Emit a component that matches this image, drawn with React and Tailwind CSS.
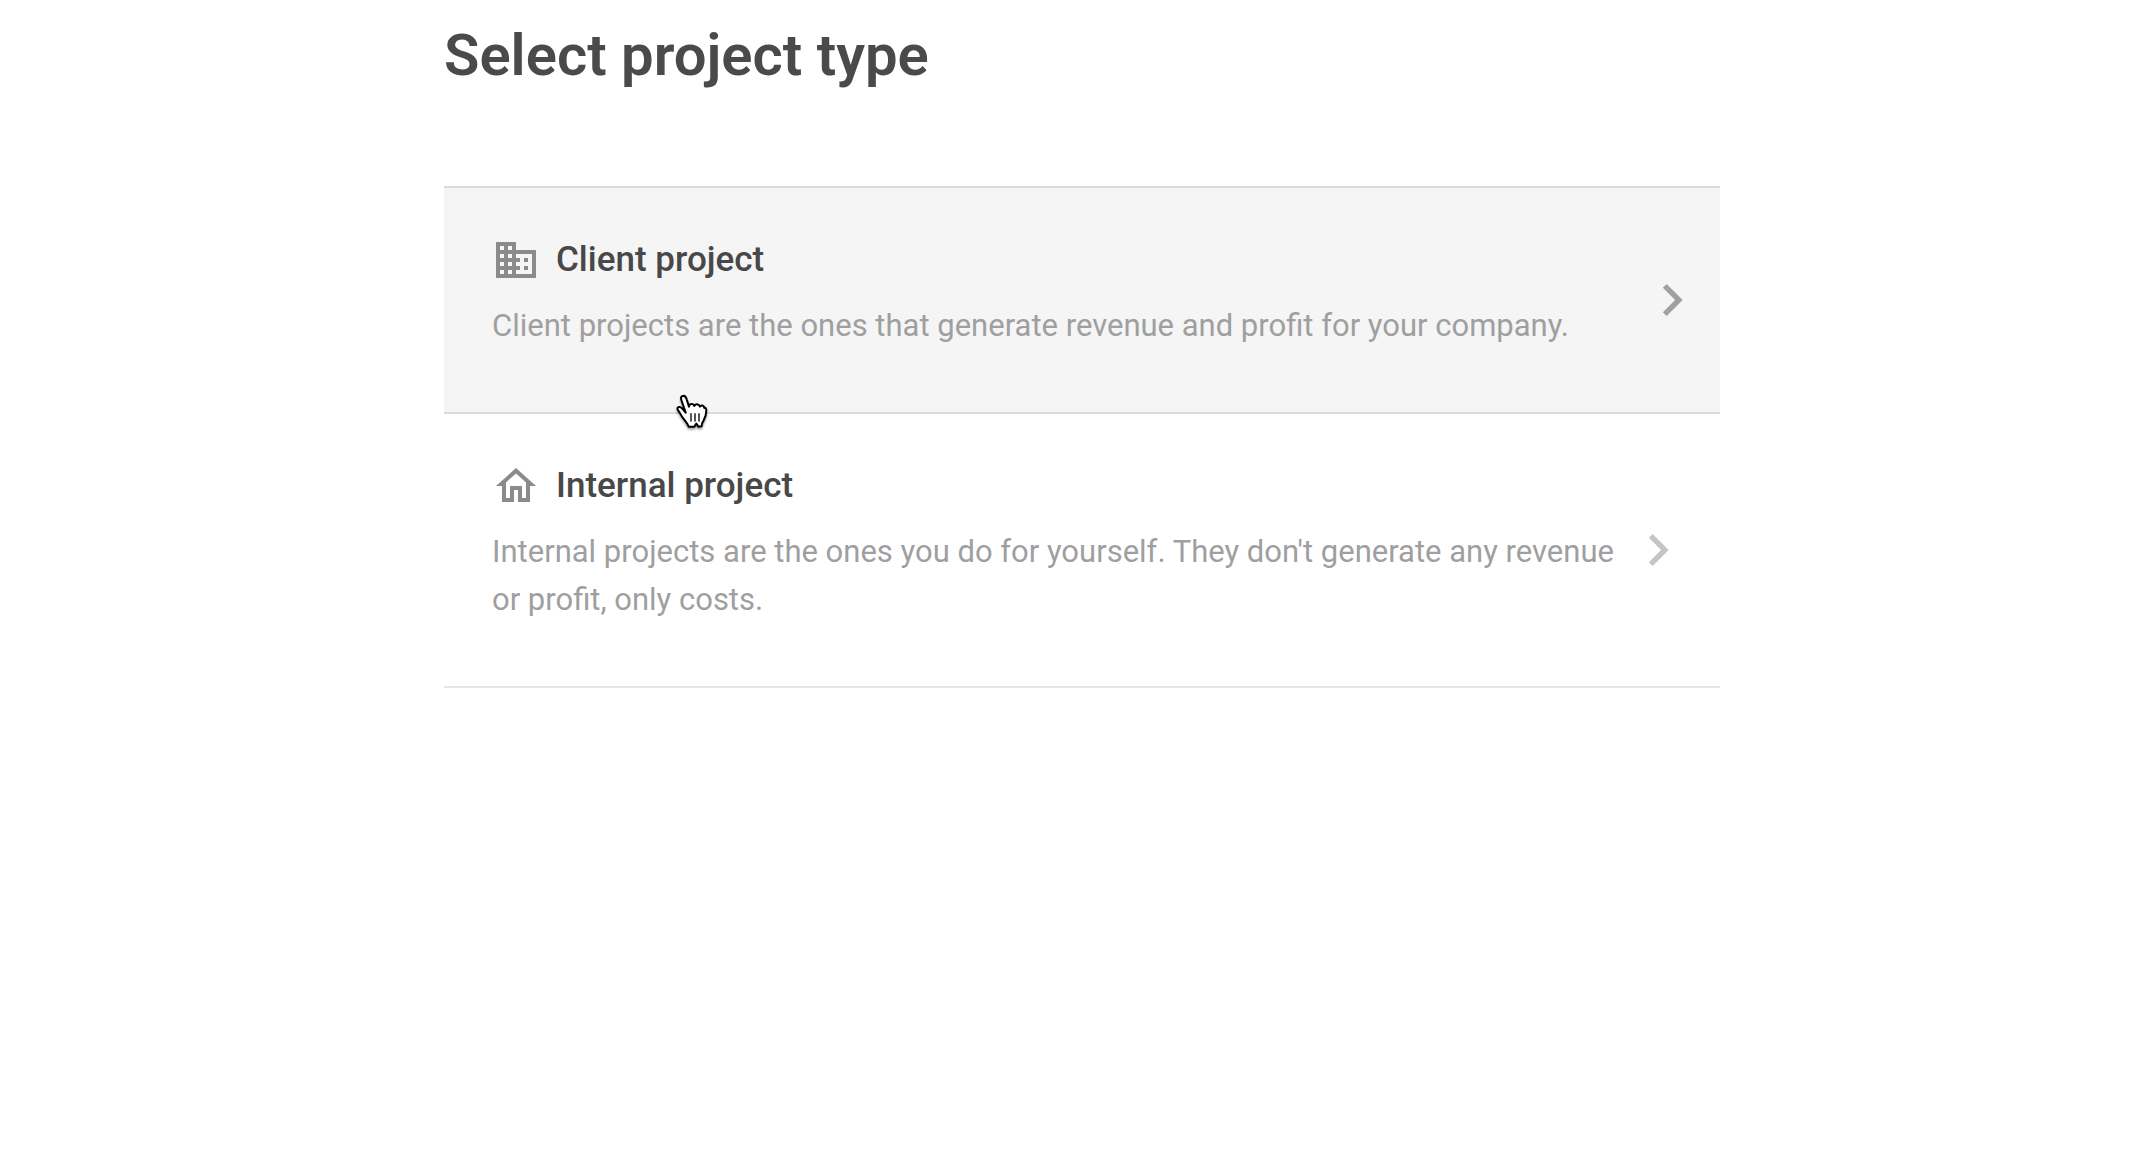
import { useState } from 'react';
import { MdBusiness, MdChevronRight, MdOutlineHome } from 'react-icons/md';

const projectTypes = [
  {
    id: 'client',
    title: 'Client project',
    description: 'Client projects are the ones that generate revenue and profit for your company.',
    icon: MdBusiness,
  },
  {
    id: 'internal',
    title: 'Internal project',
    description: "Internal projects are the ones you do for yourself. They don't generate any revenue or profit, only costs.",
    icon: MdOutlineHome,
  },
];

function HandCursor() {
  return (
    <svg viewBox="0 0 132 138" className="pointer-events-none absolute left-[226px] top-[200px] z-10 h-[46px] w-11 drop-shadow-[0_2px_1px_rgba(0,0,0,0.35)]" aria-hidden="true">
      <path
        d="M47 74 L35 39 C32 31 32 25 38 24 C45 22 48 27 50 34 L57 56 C57 47 70 45 73 54 C75 46 87 47 90 56 C93 50 101 52 103 60 C107 58 109 62 109 67 C109 80 106 88 101 97 C96 104 95 108 95 115 L85 116 L79 107 L73 116 H56 C54 110 50 104 45 98 C38 90 33 82 29 74 C26 69 20 64 23 59 C27 54 34 58 39 64 Z"
        fill="#fff"
        stroke="#000"
        strokeWidth="6"
        strokeLinejoin="round"
      />
      <path d="M63 77V99M75 77V99M87 77V99" stroke="#000" strokeWidth="4" strokeLinecap="round" />
    </svg>
  );
}

function ProjectTypeRow({ type, active, onHover, onSelect }) {
  const Icon = type.icon;

  return (
    <button
      type="button"
      onMouseEnter={onHover}
      onFocus={onHover}
      onClick={onSelect}
      className={`flex w-full cursor-pointer items-center border-b-2 py-12 pl-12 text-left outline-none ${active ? 'border-[#d9d9d9] bg-[#f5f5f5] pr-4' : 'border-[#e6e6e6] bg-white pr-[30px]'}`}
    >
      <span className="flex-1">
        <span className="flex items-center gap-4">
          <Icon className="size-12 shrink-0 text-[#8b8b8b]" />
          <span className="text-[35px]/12 font-medium text-[#484848]">{type.title}</span>
        </span>
        <span className="mt-[18px] mb-[14px] block text-[31px]/12 text-[#9f9f9f]">{type.description}</span>
      </span>
      <MdChevronRight className={`size-16 shrink-0 ${active ? 'text-[#a0a0a0]' : 'text-[#c5c5c5]'}`} />
    </button>
  );
}

export default function App() {
  const [activeId, setActiveId] = useState('client');

  return (
    <main className="min-h-screen bg-white pl-7 font-[Roboto,sans-serif]">
      <div className="mx-auto max-w-[1276px] pt-5">
        <h1 className="mb-24 text-[58px]/[70px] font-semibold text-[#4a4a4a]">Select project type</h1>

        <div className="relative border-t-2 border-[#d9d9d9]">
          {projectTypes.map((type) => (
            <ProjectTypeRow
              key={type.id}
              type={type}
              active={activeId === type.id}
              onHover={() => setActiveId(type.id)}
              onSelect={() => setActiveId(type.id)}
            />
          ))}
          <HandCursor />
        </div>
      </div>
    </main>
  );
}
